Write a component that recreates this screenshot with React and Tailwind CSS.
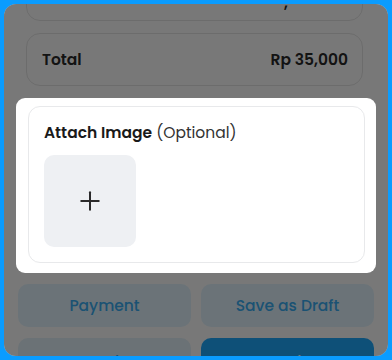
import { Plus } from 'lucide-react';

const FONT = { fontFamily: 'Poppins, Inter, "Noto Sans", sans-serif' };

export default function App() {
  return (
    <div className="w-[392px] h-[360px] bg-[#0a9cff] p-[4px]" style={FONT}>
      <div className="relative w-full h-full overflow-hidden rounded-[12px] bg-white">
        {/* page under the dialog */}
        <div className="flex flex-col">
          <div className="ml-[22px] w-[337px] -mt-[30px] h-[47px] rounded-b-[14px] border border-[#e6e6e6] bg-white">
            <div className="mt-[20px] ml-[257px] text-[15px] font-semibold text-[#1f1f1f] leading-none">,</div>
          </div>
          <div className="ml-[22px] w-[337px] mt-[12px] h-[53px] flex items-center justify-between pl-[15px] pr-[14px] rounded-[14px] border border-[#e6e6e6] bg-white">
            <span className="text-[15.5px] font-semibold text-[#2a2a2a]">Total</span>
            <span className="text-[15.5px] font-semibold text-[#2a2a2a]">Rp 35,000</span>
          </div>
          <div className="h-[198px]" />
          <div className="grid grid-cols-2 gap-x-[10px] gap-y-[11px] px-[14px]">
            <button className="h-[43px] rounded-[10px] bg-[#e4f5ff] text-[15.5px] font-medium text-[#3aaef5]">Payment</button>
            <button className="h-[43px] rounded-[10px] bg-[#e4f5ff] text-[15.5px] font-medium text-[#3aaef5]">Save as Draft</button>
            <button className="h-[48px] rounded-[10px] bg-[#e4f2fa] text-[15.5px] font-medium text-[#3aaef5]">Back</button>
            <button className="h-[48px] rounded-[10px] bg-[#1faaff] text-[15.5px] font-medium text-white">Complete</button>
          </div>
        </div>

        {/* dimmed overlay + dialog */}
        <div className="absolute inset-0 bg-black/[0.53]">
          <div className="absolute left-[12px] right-[12px] top-[94px] rounded-[9px] bg-white pt-[8px] pb-[10px] pl-[12px] pr-[11px]">
            <div className="rounded-[12px] border border-[#e8e9eb] px-[15px] pt-[15px] pb-[15px]">
              <p className="text-[15.5px] leading-[22px] text-[#1a1a1a]">
                <span className="font-semibold">Attach Image</span>{' '}
                <span className="text-[#333]">(Optional)</span>
              </p>
              <div className="mt-[11px] w-[92px] h-[92px] rounded-[10px] bg-[#eef0f3] flex items-center justify-center">
                <Plus className="w-[30px] h-[30px] text-[#2a2a2a]" strokeWidth={1.6} />
              </div>
            </div>
          </div>
        </div>
      </div>
    </div>
  );
}
